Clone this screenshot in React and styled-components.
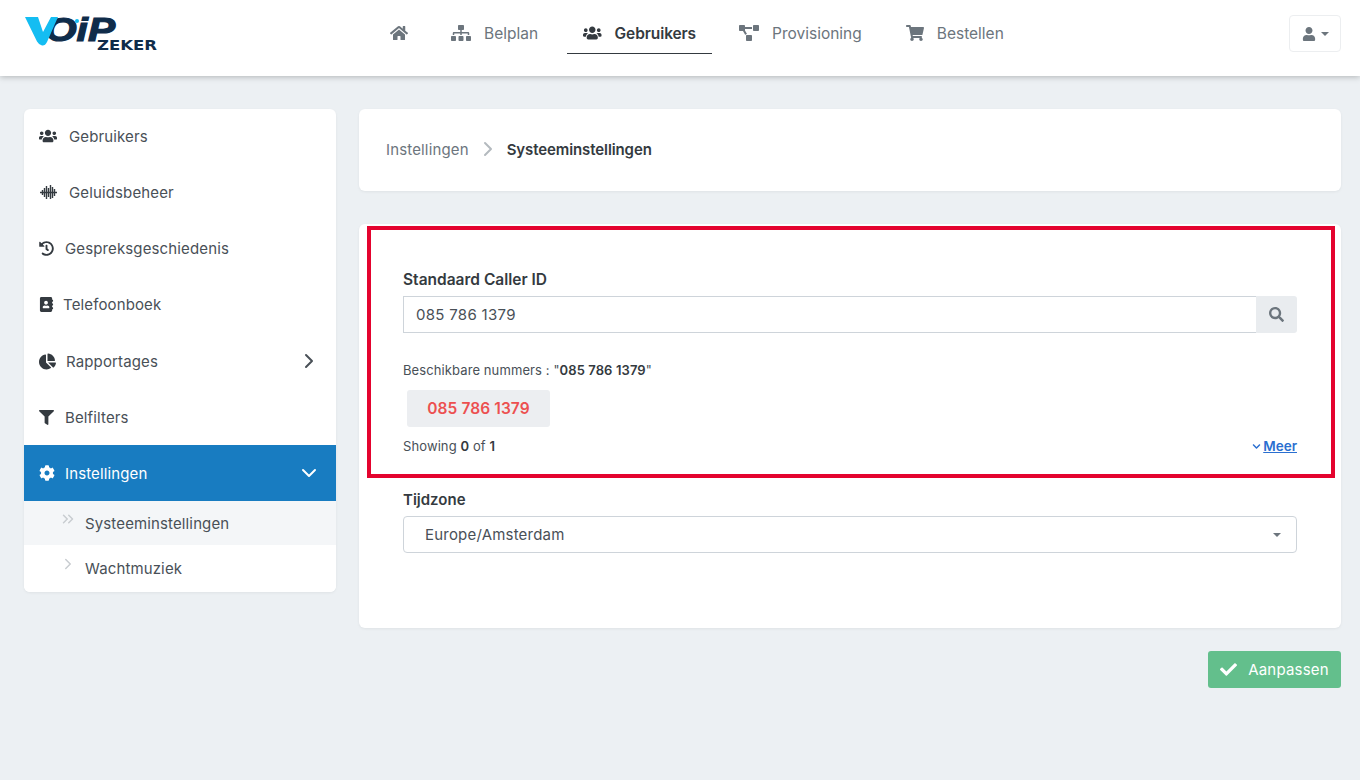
import React from 'react';
import styled, { createGlobalStyle } from 'styled-components';
import {
  FaHome, FaSitemap, FaUsers, FaProjectDiagram, FaShoppingCart, FaUser, FaHistory,
  FaAddressBook, FaChartPie, FaFilter, FaCog, FaSearch, FaCheck, FaChevronDown,
} from 'react-icons/fa';
import { FiChevronRight, FiChevronDown, FiChevronsRight } from 'react-icons/fi';

const GlobalStyle = createGlobalStyle`
  html, body { margin: 0; padding: 0; background: #eceff2; }
  body { font-family: 'Inter', 'Liberation Sans', sans-serif; color: #343a40; }
  * { box-sizing: border-box; }
`;

const Page = styled.div`
  width: 1360px;
  height: 780px;
  overflow: hidden;
  background: #ecf0f3;
`;

const Header = styled.header`
  height: 76px;
  background: #fff;
  box-shadow: 0 1px 6px rgba(0, 0, 0, 0.25);
  display: flex;
  align-items: flex-start;
  padding: 0 19px 0 24px;
  position: relative;
`;

const LogoBox = styled.div`
  width: 134px;
  height: 38px;
  margin-top: 14px;
  flex: none;
`;

const Nav = styled.nav`
  display: flex;
  margin-left: 216px;
  margin-top: 14px;
  gap: 12px;
`;

const NavItem = styled.a`
  height: 40px;
  display: flex;
  align-items: center;
  justify-content: center;
  gap: 13px;
  padding: 0 ${(p) => p.$pr || 16}px 1px 16px;
  font-size: 15.5px;
  font-weight: ${(p) => (p.$active ? 600 : 400)};
  letter-spacing: ${(p) => (p.$active ? '-0.1px' : '0')};
  color: ${(p) => (p.$active ? '#343a40' : '#6c757d')};
  border-bottom: 1px solid ${(p) => (p.$active ? '#343a40' : 'transparent')};
  ${(p) => p.$active && 'width: 145px; margin: 0 -1px 0 1px;'}
  svg { font-size: ${(p) => p.$icon || 20}px; color: ${(p) => (p.$active ? '#343a40' : '#6c757d')}; }
`;

const UserButton = styled.button`
  margin-left: auto;
  margin-top: 15px;
  width: 52px;
  height: 37px;
  background: #fff;
  border: 1px solid #eceef0;
  border-radius: 4px;
  display: flex;
  align-items: center;
  justify-content: center;
  gap: 5px;
  padding: 0;
  color: #6c757d;
  svg { font-size: 14px; }
`;

const Caret = styled.span`
  width: 0;
  height: 0;
  border-left: 4.5px solid transparent;
  border-right: 4.5px solid transparent;
  border-top: 4.5px solid ${(p) => p.$color || '#6c757d'};
`;

const Body = styled.div`
  display: flex;
  align-items: flex-start;
  padding: 33px 19px 0 24px;
  gap: 23px;
`;

const Sidebar = styled.aside`
  width: 312px;
  flex: none;
  background: #fff;
  border-radius: 6px;
  overflow: hidden;
  box-shadow: 0 1px 3px rgba(0, 0, 0, 0.06);
`;

const SideItem = styled.a`
  display: flex;
  align-items: center;
  height: 56px;
  padding: 0 15px ${(p) => (p.$lift ? 2 : 0)}px 15px;
  font-size: 15px;
  letter-spacing: 0.13px;
  color: ${(p) => (p.$active ? '#fff' : '#495057')};
  background: ${(p) => (p.$active ? '#187cc1' : 'transparent')};
`;

const SideIcon = styled.span`
  width: ${(p) => p.$w}px;
  flex: none;
  display: flex;
  align-items: center;
  font-size: ${(p) => p.$size || 16}px;
  color: ${(p) => (p.$light ? '#fff' : '#343a40')};
`;

const SideArrow = styled.span`
  margin-left: auto;
  width: 24px;
  display: flex;
  justify-content: center;
  font-size: ${(p) => p.$size || 24}px;
  color: ${(p) => (p.$light ? '#fff' : '#495057')};
`;

const SubItem = styled.a`
  display: flex;
  align-items: center;
  height: ${(p) => (p.$active ? 44 : 47)}px;
  padding-left: 35px;
  padding-bottom: ${(p) => (p.$active ? 0 : 1)}px;
  font-size: 15px;
  letter-spacing: 0.13px;
  color: #495057;
  background: ${(p) => (p.$active ? '#f4f6f8' : '#fff')};
`;

const SubIcon = styled.span`
  width: 26px;
  display: flex;
  margin-top: -8px;
  font-size: 18px;
  color: #c9cdd1;
`;

const Main = styled.main`
  flex: 1;
  display: flex;
  flex-direction: column;
`;

const Card = styled.section`
  background: #fff;
  border-radius: 6px;
  box-shadow: 0 1px 3px rgba(0, 0, 0, 0.06);
`;

const BreadcrumbCard = styled(Card)`
  height: 82px;
  display: flex;
  align-items: center;
  padding: 0 27px 2px;
  font-size: 15px;
`;

const CrumbLink = styled.span`
  color: #6c757d;
  letter-spacing: 0.15px;
`;

const CrumbSep = styled.span`
  display: flex;
  margin: 0 7px;
  font-size: 24px;
  color: #b4babf;
`;

const CrumbCurrent = styled.span`
  font-size: 15px;
  letter-spacing: -0.1px;
  font-weight: 600;
  color: #343a40;
`;

const FormCard = styled(Card)`
  position: relative;
  margin-top: 33px;
  height: 404px;
  padding: 47px 44px 0;
`;

const Highlight = styled.div`
  position: absolute;
  left: 8px;
  top: 2px;
  width: 968px;
  height: 252px;
  border: 4px solid #e4032e;
  pointer-events: none;
`;

const Label = styled.label`
  display: block;
  font-size: 15.5px;
  font-weight: 600;
  line-height: 18px;
  color: #343a40;
`;

const InputGroup = styled.div`
  display: flex;
  height: 37px;
  margin-top: 7px;
`;

const TextValue = styled.div`
  flex: 1;
  display: flex;
  align-items: center;
  padding-left: 12px;
  font-size: 15px;
  letter-spacing: 0.3px;
  color: #495057;
  border: 1px solid #ced4da;
  border-right: none;
`;

const SearchAddon = styled.span`
  width: 41px;
  display: flex;
  align-items: center;
  justify-content: center;
  background: #e9ecef;
  border-radius: 0 3px 3px 0;
  font-size: 15px;
  color: #6c757d;
`;

const Hint = styled.div`
  margin-top: 29px;
  font-size: 13px;
  line-height: 16px;
  letter-spacing: 0.1px;
  color: #495057;
  b { font-weight: 600; color: #343a40; }
`;

const NumberChip = styled.div`
  width: 143px;
  height: 37px;
  margin: 12px 0 0 4px;
  display: flex;
  align-items: center;
  justify-content: center;
  background: #eceef1;
  border-radius: 3px;
  font-size: 15.5px;
  font-weight: 600;
  letter-spacing: 0.1px;
  color: #ec5050;
`;

const MetaRow = styled.div`
  display: flex;
  justify-content: space-between;
  align-items: center;
  margin-top: 11px;
  height: 16px;
  font-size: 13px;
  letter-spacing: 0.1px;
  color: #495057;
  b { font-weight: 600; color: #343a40; }
`;

const MoreLink = styled.a`
  display: flex;
  align-items: center;
  font-size: 13.5px;
  font-weight: 600;
  letter-spacing: 0;
  color: #2a6fd0;
  svg { font-size: 9px; margin-right: 2px; }
  span { text-decoration: underline; }
`;

const ZoneLabel = styled(Label)`
  margin-top: 37px;
  font-size: 15px;
`;

const SelectBox = styled.div`
  height: 37px;
  margin-top: 7px;
  padding: 0 15px 0 21px;
  display: flex;
  align-items: center;
  justify-content: space-between;
  font-size: 15px;
  letter-spacing: 0.2px;
  color: #495057;
  border: 1px solid #ced4da;
  border-radius: 4px;
`;

const Actions = styled.div`
  display: flex;
  justify-content: flex-end;
  margin-top: 23px;
`;

const SaveButton = styled.button`
  width: 133px;
  height: 37px;
  display: flex;
  align-items: center;
  justify-content: center;
  gap: 11px;
  border: none;
  border-radius: 3px;
  background: #63bf8c;
  color: #fff;
  font-family: inherit;
  font-size: 15px;
  letter-spacing: 0.2px;
  svg { font-size: 17px; }
`;

const Logo = () => (
  <svg width="134" height="38" viewBox="0 0 134 38">
    <text x="21" y="27" fontFamily="Liberation Sans" fontWeight="700" fontStyle="italic" fontSize="33" fill="#0f2c4a" stroke="#0f2c4a" strokeWidth="1.2" textLength="70" lengthAdjust="spacingAndGlyphs">OiP</text>
    <path d="M1 3h13l5 15 8-15h7L23 28q-2 4-5 3.5t-5-4z" fill="#14bdf2" />
    <circle cx="53" cy="7" r="2" fill="#14bdf2" />
    <text x="73" y="36" fontFamily="DejaVu Sans" fontWeight="700" fontSize="14" fill="#0f2c4a" textLength="60" lengthAdjust="spacingAndGlyphs">ZEKER</text>
  </svg>
);

const WaveIcon = () => (
  <svg width="19" height="16" viewBox="0 0 19 16" stroke="currentColor" strokeWidth="1.4" fill="none">
    <path d="M1 8.5h17M3.5 6v5M5.5 4v9M7.5 2v13M9.5 4v9M11.5 1v14M13.5 3v11M15.5 5v7" />
  </svg>
);

const sideItems = [
  { label: 'Gebruikers', icon: <FaUsers />, w: 30, size: 18, lift: true },
  { label: 'Geluidsbeheer', icon: <WaveIcon />, w: 30, lift: true },
  { label: 'Gespreksgeschiedenis', icon: <FaHistory />, w: 26, size: 15, lift: true },
  { label: 'Telefoonboek', icon: <FaAddressBook />, w: 24, size: 15, lift: true },
  { label: 'Rapportages', icon: <FaChartPie />, w: 27, size: 17, arrow: true },
  { label: 'Belfilters', icon: <FaFilter />, w: 26, size: 15 },
];

export default function App() {
  return (
    <Page>
      <GlobalStyle />
      <Header>
        <LogoBox><Logo /></LogoBox>
        <Nav>
          <NavItem $icon={18} $pr={15}><FaHome /></NavItem>
          <NavItem><FaSitemap />Belplan</NavItem>
          <NavItem $active><FaUsers />Gebruikers</NavItem>
          <NavItem><FaProjectDiagram />Provisioning</NavItem>
          <NavItem $icon={18}><FaShoppingCart />Bestellen</NavItem>
        </Nav>
        <UserButton><FaUser /><Caret /></UserButton>
      </Header>
      <Body>
        <Sidebar>
          {sideItems.map((item) => (
            <SideItem key={item.label} $lift={item.lift}>
              <SideIcon $w={item.w} $size={item.size}>{item.icon}</SideIcon>
              {item.label}
              {item.arrow && <SideArrow><FiChevronRight /></SideArrow>}
            </SideItem>
          ))}
          <SideItem $active>
            <SideIcon $w={26} $size={16} $light><FaCog /></SideIcon>
            Instellingen
            <SideArrow $light $size={26}><FiChevronDown /></SideArrow>
          </SideItem>
          <SubItem $active>
            <SubIcon><FiChevronsRight /></SubIcon>
            Systeeminstellingen
          </SubItem>
          <SubItem>
            <SubIcon><FiChevronRight /></SubIcon>
            Wachtmuziek
          </SubItem>
        </Sidebar>
        <Main>
          <BreadcrumbCard>
            <CrumbLink>Instellingen</CrumbLink>
            <CrumbSep><FiChevronRight /></CrumbSep>
            <CrumbCurrent>Systeeminstellingen</CrumbCurrent>
          </BreadcrumbCard>
          <FormCard>
            <Highlight />
            <Label>Standaard Caller ID</Label>
            <InputGroup>
              <TextValue>085 786 1379</TextValue>
              <SearchAddon><FaSearch /></SearchAddon>
            </InputGroup>
            <Hint>Beschikbare nummers : "<b>085 786 1379</b>"</Hint>
            <NumberChip>085 786 1379</NumberChip>
            <MetaRow>
              <span>Showing <b>0</b> of <b>1</b></span>
              <MoreLink><FaChevronDown /><span>Meer</span></MoreLink>
            </MetaRow>
            <ZoneLabel>Tijdzone</ZoneLabel>
            <SelectBox>Europe/Amsterdam<Caret /></SelectBox>
          </FormCard>
          <Actions>
            <SaveButton><FaCheck />Aanpassen</SaveButton>
          </Actions>
        </Main>
      </Body>
    </Page>
  );
}
